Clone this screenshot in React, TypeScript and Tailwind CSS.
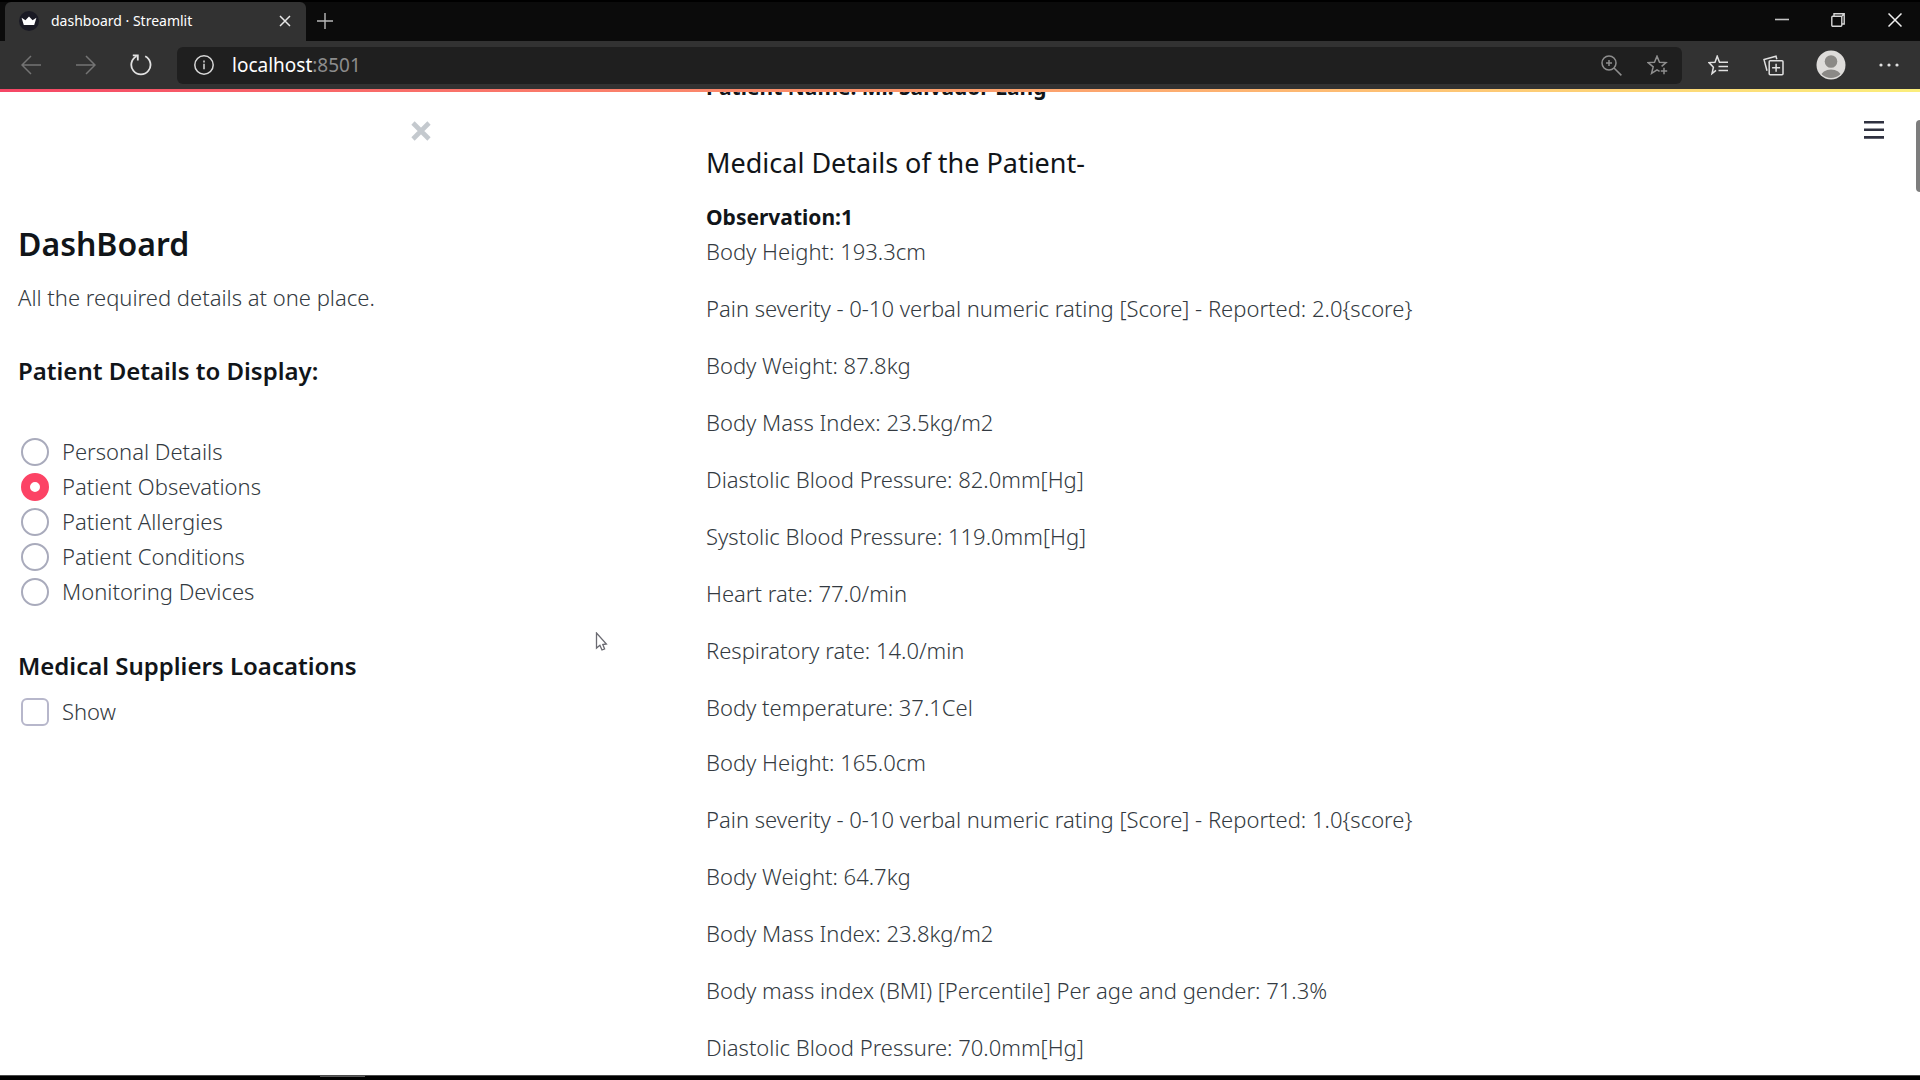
import React from "react";

const OPTIONS = [
  "Personal Details",
  "Patient Obsevations",
  "Patient Allergies",
  "Patient Conditions",
  "Monitoring Devices",
];

const ENCOUNTERS = [
  [
    "Body Height: 193.3cm",
    "Pain severity - 0-10 verbal numeric rating [Score] - Reported: 2.0{score}",
    "Body Weight: 87.8kg",
    "Body Mass Index: 23.5kg/m2",
    "Diastolic Blood Pressure: 82.0mm[Hg]",
    "Systolic Blood Pressure: 119.0mm[Hg]",
    "Heart rate: 77.0/min",
    "Respiratory rate: 14.0/min",
    "Body temperature: 37.1Cel",
  ],
  [
    "Body Height: 165.0cm",
    "Pain severity - 0-10 verbal numeric rating [Score] - Reported: 1.0{score}",
    "Body Weight: 64.7kg",
    "Body Mass Index: 23.8kg/m2",
    "Body mass index (BMI) [Percentile] Per age and gender: 71.3%",
    "Diastolic Blood Pressure: 70.0mm[Hg]",
  ],
];

function TitleBar() {
  return (
    <div className="flex h-[39px] shrink-0 items-stretch bg-[#0b0b0b]">
      <div className="ml-[5px] flex w-[301px] items-center rounded-t-md bg-[#323232] pb-[2px] pl-[14px] pr-[11px]">
        <svg className="h-5 w-5" viewBox="0 0 20 20">
          <circle cx="10" cy="10" r="10" fill="#1a1a24" />
          <path d="M2.6 6.8 6.4 9.2 10 5.6l3.6 3.6 3.8-2.4-2.2 7.2H4.8z" fill="#fff" />
        </svg>
        <span className="ml-3 flex-1 text-[14px] text-white">dashboard · Streamlit</span>
        <button aria-label="Close tab" className="flex h-5 w-5 items-center justify-center">
          <svg className="h-3 w-3" viewBox="0 0 12 12" stroke="#e8e8e8" strokeWidth="1.5">
            <path d="M1 1l10 10M11 1 1 11" />
          </svg>
        </button>
      </div>
      <button aria-label="New tab" className="flex w-[38px] items-center justify-center pb-[2px]">
        <svg className="h-4 w-4" viewBox="0 0 16 16" stroke="#b9b9b9" strokeWidth="1.4">
          <path d="M8 0v16M0 8h16" />
        </svg>
      </button>
      <div className="ml-auto flex pb-1 pr-[2px]">
        <button aria-label="Minimize" className="flex w-14 items-center justify-center">
          <svg className="h-[14px] w-[14px]" viewBox="0 0 14 14" stroke="#c4c4c4" strokeWidth="1.6">
            <path d="M0 6.5h14" />
          </svg>
        </button>
        <button aria-label="Restore" className="flex w-14 items-center justify-center">
          <svg className="h-[14px] w-[14px]" viewBox="0 0 14 14" fill="none" stroke="#d6d6d6" strokeWidth="1.4">
            <rect x="0.8" y="3.2" width="10" height="10" rx="1" />
            <path d="M3 3V.8h10.2V11H11M10.8 3.2l2-2" />
          </svg>
        </button>
        <button aria-label="Close window" className="flex w-[52px] items-center justify-center pl-[6px]">
          <svg className="h-[14px] w-[14px]" viewBox="0 0 14 14" stroke="#f0f0f0" strokeWidth="1.5">
            <path d="M.5.5l13 13M13.5.5l-13 13" />
          </svg>
        </button>
      </div>
    </div>
  );
}

function Toolbar() {
  return (
    <div className="flex h-[48px] shrink-0 items-center bg-[#323232]">
      <button aria-label="Back" className="ml-[21px] flex h-8 w-5 items-center">
        <svg className="h-5 w-5" viewBox="0 0 20 20" fill="none" stroke="#747474" strokeWidth="1.5">
          <path d="M20 10H1M10 1 1 10l9 9" />
        </svg>
      </button>
      <button aria-label="Forward" className="ml-[35px] flex h-8 w-5 items-center">
        <svg className="h-5 w-5" viewBox="0 0 20 20" fill="none" stroke="#747474" strokeWidth="1.5">
          <path d="M0 10h19M10 1l9 9-9 9" />
        </svg>
      </button>
      <button aria-label="Refresh" className="ml-[34px] flex h-8 w-[22px] items-center">
        <svg className="h-[22px] w-[22px]" viewBox="0 0 22 22" fill="none" stroke="#e2e2e2" strokeWidth="1.8">
          <path d="M15.2 2.2a9.6 9.6 0 1 1-8.6 0" />
          <path d="M2.8 1.4h5v5" />
        </svg>
      </button>
      <div className="ml-[25px] flex h-[37px] flex-1 items-center rounded-md bg-[#1f1f1f] pl-[17px] pr-[14px]">
        <svg className="h-5 w-5 shrink-0" viewBox="0 0 20 20" fill="none" stroke="#d8d8d8" strokeWidth="1.5">
          <circle cx="10" cy="10" r="9.2" />
          <path d="M10 8.8v5.4M10 5.6v1.8" />
        </svg>
        <a href="#address" className="ml-[18px] flex-1 text-[19px] text-[#8c8c8c]">
          <span className="text-white">localhost</span>:8501
        </a>
        <button aria-label="Zoom">
          <svg className="h-[21px] w-[21px]" viewBox="0 0 21 21" fill="none" stroke="#8e8e8e" strokeWidth="1.5">
            <circle cx="8" cy="8" r="7" />
            <path d="M13 13l7.4 7.4M8 5v6M5 8h6" />
          </svg>
        </button>
        <button aria-label="Add to favorites" className="ml-[25px]">
          <svg className="h-[21px] w-[21px]" viewBox="0 0 21 21" fill="none" stroke="#8e8e8e" strokeWidth="1.5">
            <path d="M12.6 16.4 10 14.8l-5.4 3.6 1.6-6.6L1 7.6l6.5-.4L10 1.2l2.5 6 6.5.4-4.4 3.8M17 12.8v6.4M13.8 16h6.4" />
          </svg>
        </button>
      </div>
      <button aria-label="Favorites" className="ml-[26px]">
        <svg className="h-[21px] w-[21px]" viewBox="0 0 21 21" fill="none" stroke="#e0e0e0" strokeWidth="1.5">
          <path d="M8 15.4 4 18.6l1.4-6.4L1 7.6l6-.4 2.2-6 2.3 6H20M10.5 11.4H20M10.5 15.6H20" />
        </svg>
      </button>
      <button aria-label="Collections" className="ml-[34px]">
        <svg className="h-[21px] w-[21px]" viewBox="0 0 21 21" fill="none" stroke="#e0e0e0" strokeWidth="1.5">
          <path d="M4 15.8 1 4.6 13 1.2l.8 3" />
          <rect x="6.2" y="5.8" width="13.8" height="14" rx="1" />
          <path d="M13.1 8.8v8M9.1 12.8h8" />
        </svg>
      </button>
      <button aria-label="Profile" className="ml-[32px]">
        <svg className="h-[30px] w-[30px]" viewBox="0 0 30 30">
          <clipPath id="avatar">
            <circle cx="15" cy="15" r="13" />
          </clipPath>
          <circle cx="15" cy="15" r="14.5" fill="#dedcda" />
          <g clipPath="url(#avatar)" fill="#8b8986">
            <circle cx="15" cy="11.5" r="6.3" />
            <ellipse cx="15" cy="26" rx="10" ry="6.5" />
          </g>
        </svg>
      </button>
      <button aria-label="More" className="ml-[33px] mr-[21px]">
        <svg className="h-5 w-5" viewBox="0 0 20 20" fill="#e0e0e0">
          <circle cx="2" cy="10" r="1.6" />
          <circle cx="10" cy="10" r="1.6" />
          <circle cx="18" cy="10" r="1.6" />
        </svg>
      </button>
    </div>
  );
}

function Sidebar() {
  return (
    <aside className="w-[440px] shrink-0 pl-[18px]">
      <div className="flex justify-end pr-[8px] pt-[28px]">
        <button aria-label="Close sidebar">
          <svg className="h-[22px] w-[22px]" viewBox="0 0 22 22" stroke="#c4c9ce" strokeWidth="4.6">
            <path d="M3 3l16 16M19 3 3 19" />
          </svg>
        </button>
      </div>
      <h1 className="mt-[80px] text-[32px] font-semibold leading-[44px] text-[#111519]">DashBoard</h1>
      <p className="mt-[14px] text-[22px] leading-[34px]">All the required details at one place.</p>
      <h3 className="mt-[40px] text-[24px] font-semibold leading-[34px] text-[#111519]">Patient Details to Display:</h3>
      <div role="radiogroup" aria-label="Patient details" className="mt-[46px]">
        {OPTIONS.map((o) => (
          <label key={o} className="flex h-[35px] items-center pl-[3px] text-[22px]">
            <input
              type="radio"
              name="detail"
              defaultChecked={o === "Patient Obsevations"}
              className="mr-[13px] h-7 w-7 appearance-none rounded-full border-2 border-[#a9abbc] bg-white checked:border-[9px] checked:border-[#fc4365]"
            />
            {o}
          </label>
        ))}
      </div>
      <h3 className="mt-[40px] text-[24px] font-semibold leading-[34px] text-[#111519]">Medical Suppliers Loacations</h3>
      <label className="mt-[11px] flex h-[35px] items-center pl-[3px] text-[22px]">
        <input type="checkbox" className="mr-[13px] h-7 w-7 appearance-none rounded-md border-2 border-[#b7b7cb] bg-white" />
        Show
      </label>
    </aside>
  );
}

export default function App() {
  return (
    <div className="flex h-screen flex-col overflow-hidden bg-black pt-[2px] font-['Noto_Sans',sans-serif]">
      <TitleBar />
      <Toolbar />
      <div className="h-[3px] shrink-0 bg-linear-to-r from-[#f54666] via-[#fb9a6c] to-[#fbee7c]" />
      <div className="flex min-h-0 flex-1 overflow-hidden bg-white font-light text-[#333a41]">
        <Sidebar />
        <main className="ml-[266px] min-w-0 flex-1">
          <h3 className="-mt-[22px] text-[21px] font-bold leading-[34px] text-[#111519]">Patient Name: Mr. Salvador Lang</h3>
          <h2 className="mt-[39px] text-[27px] font-normal leading-[40px] text-[#111519]">Medical Details of the Patient-</h2>
          <h4 className="mt-[17px] text-[21px] font-bold leading-[34px] text-[#111519]">Observation:1</h4>
          <div className="flex flex-col gap-[21px]">
            {ENCOUNTERS.map((rows, g) => (
              <div key={g} className="flex flex-col gap-[23px]">
                {rows.map((t) => (
                  <p key={t} className="text-[22px] leading-[34px]">{t}</p>
                ))}
              </div>
            ))}
          </div>
        </main>
        <div className="flex w-14 shrink-0 justify-between pt-[28px]">
          <button aria-label="Menu" className="h-5 w-5">
            <svg className="h-5 w-5" viewBox="0 0 20 20" stroke="#2f3140" strokeWidth="2.6">
              <path d="M0 2.2h20M0 9.8h20M0 17.4h20" />
            </svg>
          </button>
          <div className="h-[72px] w-[4px] rounded-l-md bg-[#7d7d7d]" />
        </div>
      </div>
      <div className="h-[5px] shrink-0 border-t border-[#4a4a4a] bg-black pl-[320px]">
        <div className="h-px w-[45px] bg-[#5a5a5a]" />
      </div>
      <svg className="absolute left-[595px] top-[632px] h-5 w-4" viewBox="0 0 16 20" fill="#fff" stroke="#6b6b72" strokeWidth="1.3">
        <path d="M1.5 1v15l3.4-2.8L7 18l2.6-1-1.8-4.4 3.6-.6z" />
      </svg>
    </div>
  );
}
